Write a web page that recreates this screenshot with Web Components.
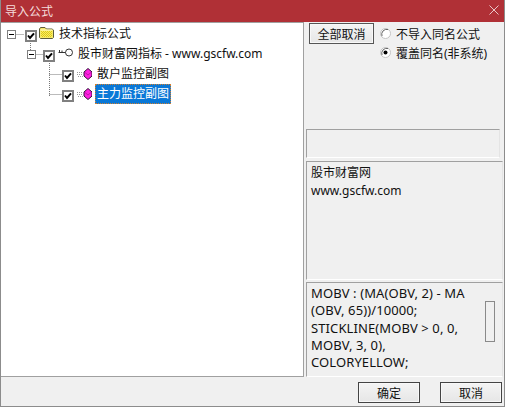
<!DOCTYPE html>
<html>
<head>
<meta charset="utf-8">
<style>
  html, body { margin: 0; padding: 0; background: #f0f0f0; }
  body { font: 12px "Noto Sans", "Noto Sans CJK SC", sans-serif; color: #000; }
</style>
</head>
<body>
<x-dialog caption="导入公式">
  <x-tree slot="tree">
    <x-node level="0" toggle icon="folder">技术指标公式</x-node>
    <x-node level="1" toggle icon="key">股市财富网指标 - www.gscfw.com</x-node>
    <x-node level="2" icon="gem">散户监控副图</x-node>
    <x-node level="2" icon="gem" selected>主力监控副图</x-node>
  </x-tree>
  <x-options slot="side"></x-options>
</x-dialog>

<script>
;(function(){

  const checkSvg = `<svg width="12" height="12" viewBox="0 0 12 12" style="display:block"><rect x="1" y="1" width="10" height="10" fill="#fff" stroke="#808080" stroke-width="2"/><path d="M3 5.5 L5 8 L9 3.3" fill="none" stroke="#000" stroke-width="2"/></svg>`;

  const icons = {
    folder: `<svg width="15" height="12" viewBox="0 0 15 12"><path d="M0.5 10.5 V2 L1.5 0.5 H6 L7.5 2 H13 L14.5 3 V10.5 L13.5 11.5 H1.5 Z" fill="#f6e96a" stroke="#5c5c3a"/><path d="M1.5 3 H13.5" stroke="#fffbc8"/><path d="M2 4.5 H13 M3 5.5 H13 M2 6.5 H13 M3 7.5 H13 M2 8.5 H13 M3 9.5 H13" stroke="#e0cc10" stroke-dasharray="1 1"/></svg>`,
    key: `<svg width="15" height="9" viewBox="0 0 15 9"><circle cx="11" cy="4.5" r="3.5" fill="#fff" stroke="#333"/><path d="M0.5 4.5 H7.5 M1.5 4.5 V2 M4 4.5 V2.5" fill="none" stroke="#333"/></svg>`,
    gem: `<svg width="15" height="12" viewBox="0 0 15 12"><path d="M0 4.5 H6 M0 6.5 H6 M1 8.5 H6" stroke="#999" stroke-dasharray="1 1"/><path d="M11 0.5 L15 4 V8 L11 11.5 L7 8 V4 Z" fill="#ff1fe0" stroke="#30103a"/><path d="M8 4.5 L11 7 L14 4.5" fill="none" stroke="#a01090" stroke-width="0.7"/></svg>`
  };

  customElements.define('x-dialog', class extends HTMLElement {
    constructor() {
      super();
      this.attachShadow({ mode: 'open' });
      this.shadowRoot.innerHTML = /*html*/`
        <style>
          :host {
            display: flex;
            flex-direction: column;
            box-sizing: border-box;
            width: 505px;
            height: 407px;
            background: #f0f0f0;
            border: 1px solid #8c8c8c;
            border-top: 0;
            overflow: hidden;
          }
          .title {
            display: flex;
            align-items: center;
            justify-content: space-between;
            height: 22px;
            margin: 0 -1px;
            padding: 0 6px 0 5px;
            background: #b03036;
            color: #f4dcdc;
            font-size: 12px;
            flex: none;
          }
          .title svg { display: block; margin-top: -2px; }
          .main { display: flex; height: 355px; flex: none; }
          .left { width: 303px; flex: none; border: 1px solid #a0a0a0; border-left: 0; box-sizing: border-box; background: #fff; }
          .right { flex: 1; min-width: 0; }
          .foot {
            display: flex;
            justify-content: flex-end;
            gap: 20px;
            padding: 5px 2px 0 0;
          }
        </style>
        <div class="title"><span id="cap"></span>
          <svg width="10" height="10" viewBox="0 0 10 10"><path d="M0.5 0.5 L9.5 9.5 M9.5 0.5 L0.5 9.5" stroke="#e9c6c6" stroke-width="1"/></svg>
        </div>
        <div class="main">
          <div class="left"><slot name="tree"></slot></div>
          <div class="right"><slot name="side"></slot></div>
        </div>
        <div class="foot">
          <x-button wide>确定</x-button>
          <x-button wide>取消</x-button>
        </div>
      `;
      this.shadowRoot.querySelector('#cap').textContent = this.getAttribute('caption');
    }
  });

  customElements.define('x-button', class extends HTMLElement {
    constructor() {
      super();
      this.attachShadow({ mode: 'open' });
      this.shadowRoot.innerHTML = /*html*/`
        <style>
          :host {
            display: flex;
            align-items: center;
            justify-content: center;
            box-sizing: border-box;
            width: 65px;
            height: 21px;
            font-size: 12px;
            color: #111;
            background: linear-gradient(#f4f4f4, #e6e6e6);
            border: 1px solid #555;
            box-shadow: inset 0 0 0 1px #f8f8f8;
          }
          :host([wide]) { width: 62px; border-color: #444; }
        </style>
        <slot></slot>
      `;
    }
  });

  customElements.define('x-tree', class extends HTMLElement {
    constructor() {
      super();
      this.attachShadow({ mode: 'open' });
      this.shadowRoot.innerHTML = /*html*/`
        <style>
          :host { display: block; position: relative; padding-top: 1px; }
          svg { position: absolute; left: 0; top: 0; pointer-events: none; }
        </style>
        <slot></slot>
        <svg width="100" height="90" viewBox="0 0 100 90">
          <!-- dotted connectors, these lie over the rows -->
          <g stroke="#777" stroke-dasharray="1 1" fill="none">
            <path d="M15.5 11.5 H23"/>
            <path d="M29.5 20 V27"/>
            <path d="M35.5 31.5 H42"/>
            <path d="M48.5 40 V73 M48.5 51.5 H61 M48.5 71.5 H61"/>
          </g>
        </svg>
      `;
    }
  });

  customElements.define('x-node', class extends HTMLElement {
    constructor() {
      super();
      const level = +this.getAttribute('level');
      const hasToggle = this.hasAttribute('toggle');
      const icon = icons[this.getAttribute('icon')];
      this.attachShadow({ mode: 'open' });
      this.shadowRoot.innerHTML = /*html*/`
        <style>
          :host {
            display: flex;
            align-items: center;
            height: 20px;
            font-size: 12px;
            color: #111;
            padding-left: ${[6, 26, 61][level]}px;
          }
          .tog {
            box-sizing: border-box;
            width: 9px; height: 9px;
            border: 1px solid #808080;
            background: #fff;
            position: relative;
            margin-right: ${level === 0 ? 9 : 7}px;
            flex: none;
          }
          .tog::after { content: ''; position: absolute; left: 1px; top: 3px; width: 5px; height: 1px; background: #000; }
          .chk { margin-top: 3px; display: flex; flex: none; }
          .ico {
            display: flex; flex: none; align-items: center; width: 15px;
            margin-left: ${level === 0 ? 2 : 3}px;
            margin-bottom: ${[2, 3, 0][level]}px;
          }
          .txt { margin-left: 5px; white-space: nowrap; line-height: 18px; }
          :host([selected]) .txt {
            box-sizing: border-box;
            margin-left: 3px;
            height: 20px;
            line-height: 20px;
            padding: 0 2px;
            background: #0a78d7;
            color: #fff;
            outline: 1px dotted #d08030;
            outline-offset: -1px;
          }
        </style>
        ${hasToggle ? '<div class="tog"></div>' : ''}
        <div class="chk">${checkSvg}</div>
        <div class="ico">${icon}</div>
        <span class="txt"><slot></slot></span>
      `;
    }
  });

  customElements.define('x-radio', class extends HTMLElement {
    constructor() {
      super();
      this.attachShadow({ mode: 'open' });
      this.shadowRoot.innerHTML = /*html*/`
        <style>
          :host { display: flex; align-items: center; gap: 5px; height: 19px; font-size: 12px; color: #111; }
          svg { flex: none; }
        </style>
        <svg width="11" height="11" viewBox="0 0 11 11">
          <circle cx="5.5" cy="5.5" r="5" fill="#fff" stroke="#c4c4c4"/>
          <path d="M2 8 A5 5 0 0 1 8 1.5" fill="none" stroke="#666"/>
          ${this.hasAttribute('checked') ? '<circle cx="5.5" cy="5.5" r="2" fill="#000"/>' : ''}
        </svg>
        <slot></slot>
      `;
    }
  });

  customElements.define('x-inset', class extends HTMLElement {
    constructor() {
      super();
      this.attachShadow({ mode: 'open' });
      this.shadowRoot.innerHTML = /*html*/`
        <style>
          :host {
            display: block;
            box-sizing: border-box;
            border: 1px solid #a0a0a0;
            border-right-color: #e4e4e4;
            border-bottom-color: #ffffff;
            background: #f0f0f0;
            color: #111;
          }
          slot { white-space: pre-line; }
        </style>
        <slot></slot>
      `;
    }
  });

  customElements.define('x-options', class extends HTMLElement {
    constructor() {
      super();
      this.attachShadow({ mode: 'open' });
      this.shadowRoot.innerHTML = /*html*/`
        <style>
          :host {
            display: flex;
            flex-direction: column;
            height: 100%;
            padding: 1px 1px 0 2px;
            box-sizing: border-box;
          }
          .top { display: flex; height: 106px; flex: none; padding-left: 3px; gap: 6px; }
          .radios { display: flex; flex-direction: column; padding-top: 1px; }
          .blank { height: 29px; flex: none; margin-right: 3px; }
          .info { height: 119px; flex: none; margin-top: 3px; padding: 2px 4px; font-size: 12px; line-height: 18px; }
          .code { position: relative; flex: none; height: 95px; margin-top: 2px; padding: 2px 4px; font-size: 13px; line-height: 17.3px; letter-spacing: 0.1px; }
          .thumb {
            position: absolute;
            right: 7px; top: 18px;
            width: 10px; height: 41px;
            box-sizing: border-box;
            border: 1px solid #8a8a8a;
            background: #f0f0f0;
          }
        </style>
        <div class="top">
          <x-button>全部取消</x-button>
          <div class="radios">
            <x-radio>不导入同名公式</x-radio>
            <x-radio checked>覆盖同名(非系统)</x-radio>
          </div>
        </div>
        <x-inset class="blank"></x-inset>
        <x-inset class="info">股市财富网
www.gscfw.com</x-inset>
        <x-inset class="code">MOBV : (MA(OBV, 2) - MA
(OBV, 65))/10000;
STICKLINE(MOBV &gt; 0, 0,
MOBV, 3, 0),
COLORYELLOW;<div class="thumb"></div></x-inset>
      `;
    }
  });

})();
</script>
</body>
</html>
